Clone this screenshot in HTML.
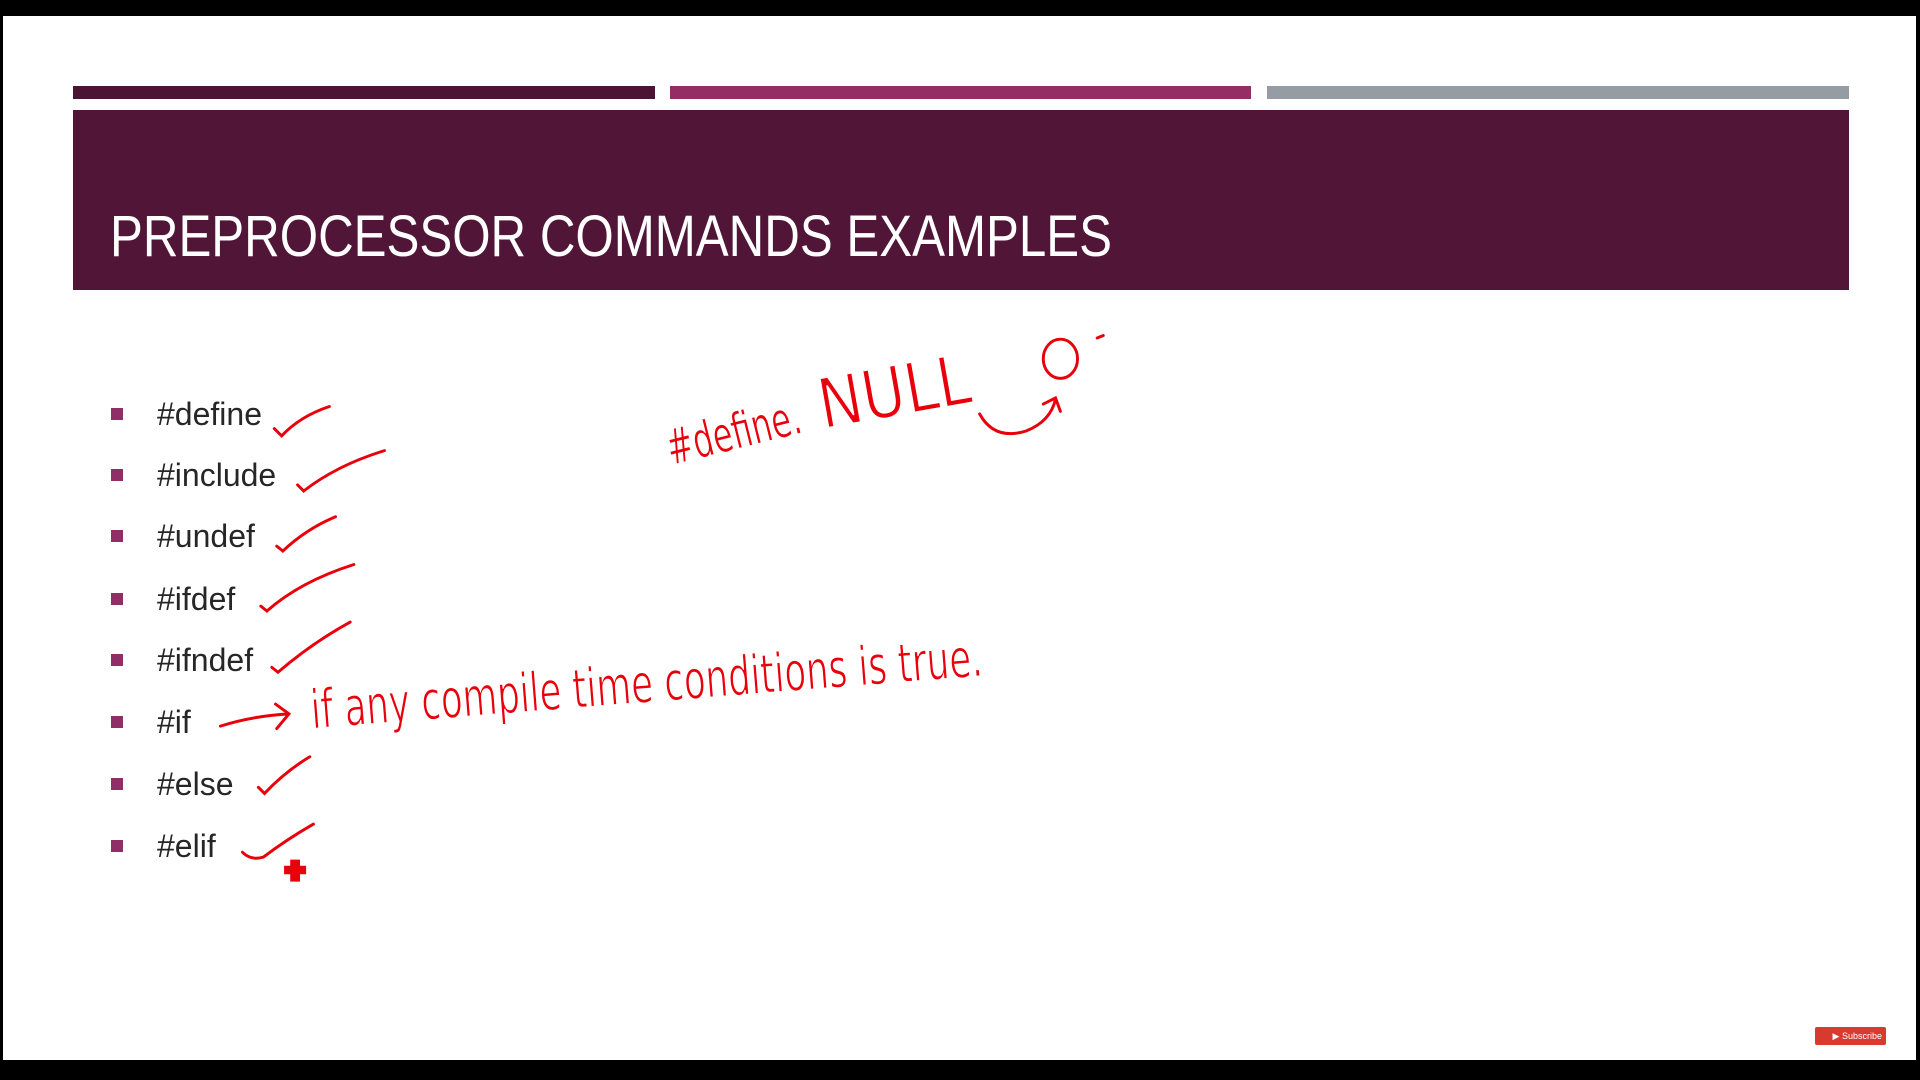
<!DOCTYPE html>
<html><head><meta charset="utf-8"><style>
html,body{margin:0;padding:0;}
body{width:1920px;height:1080px;position:relative;background:#000;overflow:hidden;font-family:"Liberation Sans Narrow","Liberation Sans",sans-serif;}
.slide{position:absolute;left:3px;top:16px;width:1913px;height:1044px;background:#fff;}
.bar{position:absolute;top:86px;height:13px;}
.hdr{position:absolute;left:73px;top:110px;width:1776px;height:180px;background:#501537;}
.title{position:absolute;left:110px;top:204px;color:#fff;font-size:58px;line-height:66px;white-space:nowrap;transform-origin:left top;}
.li{position:absolute;left:111px;height:40px;}
.li i{position:absolute;left:0;top:14px;width:12px;height:12px;background:#8f2f66;}
.li span{position:absolute;left:46px;top:0;font-size:32px;color:#262626;line-height:40px;white-space:nowrap;}
svg{position:absolute;left:0;top:0;}
.sub{position:absolute;left:1815px;top:1027px;width:71px;height:18px;background:#d93a2f;color:#fff;font:9px "Liberation Sans",sans-serif;line-height:18px;text-align:right;padding-right:4px;box-sizing:border-box;border-radius:2px;}
</style></head><body>
<div class="slide"></div>
<div class="bar" style="left:73px;width:582px;background:#4b1434"></div>
<div class="bar" style="left:670px;width:581px;background:#932d63"></div>
<div class="bar" style="left:1267px;width:582px;background:#969ca3"></div>
<div class="hdr"></div>
<div class="title" id="t">PREPROCESSOR COMMANDS EXAMPLES</div>
<div class="li" style="top:394px"><i></i><span>#define</span></div>
<div class="li" style="top:455px"><i></i><span>#include</span></div>
<div class="li" style="top:516px"><i></i><span>#undef</span></div>
<div class="li" style="top:579px"><i></i><span>#ifdef</span></div>
<div class="li" style="top:640px"><i></i><span>#ifndef</span></div>
<div class="li" style="top:702px"><i></i><span>#if</span></div>
<div class="li" style="top:764px"><i></i><span>#else</span></div>
<div class="li" style="top:826px"><i></i><span>#elif</span></div>
<svg width="1920" height="1080" viewBox="0 0 1568 882">
<g fill="none" stroke="#e8000b" stroke-width="2.4" stroke-linecap="round">
<path d="M224,350 L230,356 Q245,340 269,332"/>
<path d="M243,396 L248,401 Q275,380 314,368"/>
<path d="M226,446 L231,450 Q250,432 274,422"/>
<path d="M213,495 L218,499 Q245,475 289,461"/>
<path d="M222,545 L227,549 Q255,525 286,508"/>
<path d="M211,643 L216,648 Q233,630 253,618"/>
<path d="M198,696 Q205,703 215,700 Q235,685 256,673"/>
<path d="M180,593 Q205,585 235,583 M225,575 L236,583 L226,595"/>
<path d="M800,338 Q812,360 838,352 Q858,344 862,326 M852,330 L862,325 L866,336"/>
<ellipse cx="866" cy="293" rx="14" ry="16"/>
<path d="M896,276 L901,274"/>
</g>
<g fill="#e8000b" font-family="DejaVu Sans Condensed, sans-serif">
<text x="548" y="380" font-size="40" transform="rotate(-14 548 380)" textLength="112" lengthAdjust="spacingAndGlyphs" font-weight="200" stroke="#fff" stroke-width="0.6">#define.</text>
<text x="672" y="350" font-size="56" transform="rotate(-10 672 350)" textLength="125" lengthAdjust="spacingAndGlyphs" stroke="#fff" stroke-width="1.2">NULL</text>
<text x="255" y="595" font-size="44" transform="rotate(-4.5 255 595)" textLength="550" lengthAdjust="spacingAndGlyphs" stroke="#fff" stroke-width="1">if any compile time conditions is true.</text>
<path d="M237,702 h8 v5 h5 v7 h-5 v6 h-8 v-6 h-5 v-7 h5z"/>
</g>
</svg>
<div class="sub">▶ Subscribe</div>
<script>
var t=document.getElementById('t');var w=t.getBoundingClientRect().width;t.style.transform='scaleX('+(1002/w)+')';
</script>
</body></html>
